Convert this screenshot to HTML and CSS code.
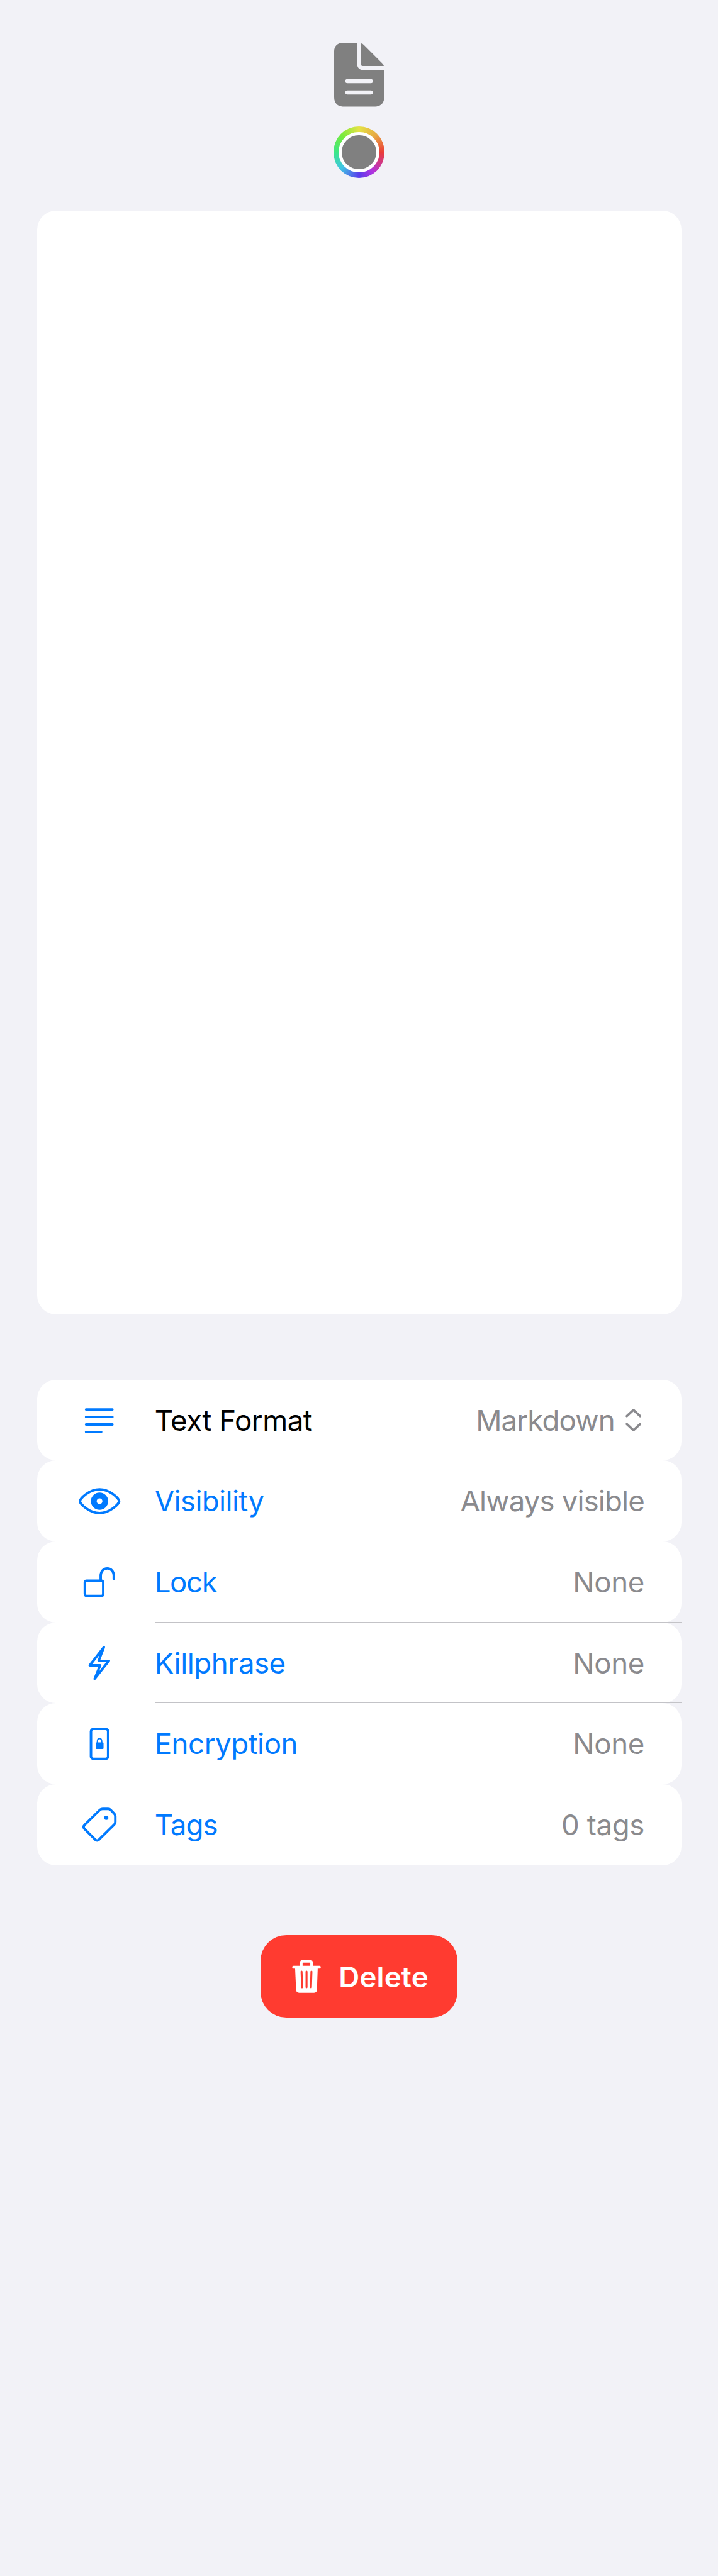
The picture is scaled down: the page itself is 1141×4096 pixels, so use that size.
FILE: index.html
```html
<!DOCTYPE html>
<html lang="en">
<head>
<meta charset="utf-8">
<meta name="viewport" content="width=device-width">
<title>Note settings</title>
<link rel="stylesheet" href="styles.css">
</head>
<body>
<main class="page">
  <header class="header">
    <svg class="doc-icon" viewBox="0 0 82 104" aria-hidden="true">
      <path fill="#808080" d="M14 0H37.300V33Q37.300 44.700 49 44.700H81.600V89C81.600 98 76 104 67 104H14C5.500 104 0 98 0 89V14C0 5.500 5.500 0 14 0Z"/>
      <path fill="#808080" d="M43.700 1Q46 1 48.500 3.500L78.500 33.500Q80.800 35.800 81 38H46.500Q43.700 38 43.700 35.200Z"/>
      <path stroke="#f2f2f7" stroke-width="6.600" stroke-linecap="round" d="M21.500 62.600H59.800M21.500 81H59.800"/>
    </svg>
    <button class="color-well" aria-label="Color"><span class="color-swatch"></span></button>
  </header>

  <section class="editor"></section>

  <section class="options">
    <div class="row row-plain">
      <svg class="icon" viewBox="0 0 110 132" aria-hidden="true"><path class="line" d="M50 48.300H93M50 60.600H93M50 72.800H93M50 85H74.700"/></svg>
      <span class="label t-format">Text Format</span>
      <span class="value v-markdown">Markdown</span>
      <svg class="chevrons" viewBox="0 0 26 38" aria-hidden="true"><path d="M2.200 12L13 2L23.800 12M2.200 25L13 35L23.800 25"/></svg>
    </div>
    <div class="row">
      <svg class="icon" viewBox="0 0 110 132" aria-hidden="true"><path class="line" d="M40 66.700C40 62.500 55 47.300 72 47.300S104 62.500 104 66.700S89 86 72 86S40 71 40 66.700Z"/><circle class="ring" cx="72" cy="66.700" r="9.400"/></svg>
      <span class="label t-visibility">Visibility</span>
      <span class="value v-visible">Always visible</span>
    </div>
    <div class="row">
      <svg class="icon" viewBox="0 0 110 132" aria-hidden="true"><rect class="line" x="48" y="64" width="30" height="25" rx="3"/><path class="line" d="M73.900 64V56C73.900 49 78 44 84.600 44S95.200 49 95.200 56V61.500"/></svg>
      <span class="label t-lock">Lock</span>
      <span class="value v-none">None</span>
    </div>
    <div class="row">
      <svg class="icon" viewBox="0 0 110 132" aria-hidden="true"><path class="line bolt" d="M79 40.200L56 69.800H73L64 91.700L87.200 62.400H70.500Z"/></svg>
      <span class="label t-killphrase">Killphrase</span>
      <span class="value v-none">None</span>
    </div>
    <div class="row">
      <svg class="icon" viewBox="0 0 110 132" aria-hidden="true"><rect class="line" x="58" y="42.200" width="28" height="48.700" rx="4"/><path class="shackle" d="M68.400 66V62.500C68.400 56.500 75.600 56.500 75.600 62.500V66"/><rect class="solid" x="65.700" y="64" width="12.800" height="11" rx="1.500"/></svg>
      <span class="label t-encryption">Encryption</span>
      <span class="value v-none">None</span>
    </div>
    <div class="row">
      <svg class="icon" viewBox="0 0 110 132" aria-hidden="true"><path class="line" d="M73 41.500Q74.500 40.200 77 40.200H86Q88.500 40.200 90 41.800L96 48Q97.700 49.800 97.700 52V61.500Q97.700 64 96 65.700L71 90.500Q68 93 65 90.500L47.500 73Q44.500 69.500 47.500 66.500Z"/><circle class="solid" cx="83" cy="54.800" r="3.400"/></svg>
      <span class="label t-tags">Tags</span>
      <span class="value v-tags">0 tags</span>
    </div>
  </section>

  <button class="delete">
    <svg class="trash" viewBox="0 0 48 54" aria-hidden="true">
      <path fill="#fff" d="M5 12H42L40.700 49Q40.500 54 36 54H11.500Q7 54 6.700 49Z"/>
      <path fill="none" stroke="#fff" stroke-width="4.600" stroke-linecap="round" d="M2.600 12.300H44.700"/>
      <path fill="none" stroke="#fff" stroke-width="4.600" d="M15 12V6Q15 2.700 18 2.700H29Q32.100 2.700 32.100 6V12"/>
      <path stroke="#ff3b30" stroke-width="3.200" stroke-linecap="round" d="M15.600 19.500L16.500 45M23.700 19.500V45M31.700 19.500L30.900 45"/>
    </svg>
    <span class="delete-label">Delete</span>
  </button>
</main>
</body>
</html>
```
FILE: styles.css
```css
html {
  font-size: 9.75px;
  background: #f2f2f7;
}

body {
  margin: 0;
  font-family: Inter, "Liberation Sans", sans-serif;
}

button {
  border: 0;
  padding: 0;
  font: inherit;
}

.page {
  box-sizing: border-box;
  height: 420rem;
  padding: 7rem 6rem 0;
  display: flex;
  flex-direction: column;
}

.header {
  display: flex;
  flex-direction: column;
  align-items: center;
  gap: 3.2rem;
  height: 27.4rem;
}

.doc-icon {
  width: 8.2rem;
  height: 10.4rem;
}

.color-well {
  box-sizing: border-box;
  width: 8.4rem;
  height: 8.4rem;
  padding: 0.9rem;
  border-radius: 50%;
  background: conic-gradient(#e5e345, #e7a843 45deg, #eb3c37 90deg, #b134df 145deg, #5a3cec 180deg, #40c6e4 228deg, #3ce787 270deg, #78eb3c 315deg, #e5e345);
}

.color-swatch {
  display: block;
  box-sizing: border-box;
  width: 6.6rem;
  height: 6.6rem;
  border: 0.6rem solid #fff;
  border-radius: 50%;
  background: #808080;
}

.editor {
  height: 180rem;
  border-radius: 3.1rem;
  background: #fff;
}

.options {
  margin-top: 10.6rem;
}

.row {
  position: relative;
  display: flex;
  align-items: center;
  height: 13.2rem;
  border-radius: 3.1rem;
  background: #fff;
  padding-right: 6rem;
  box-sizing: border-box;
  color: #007aff;
  font-size: 4.68rem;
  line-height: 5.8rem;
}

.row-plain {
  color: #000;
}

.row:not(:last-child)::after {
  content: "";
  position: absolute;
  left: 19.2rem;
  right: 0;
  bottom: 0;
  height: 1px;
  background: #c3c3c7;
}

.icon {
  flex: none;
  width: 11rem;
  height: 13.2rem;
  margin: 0 5.2rem 0 3rem;
  overflow: visible;
  fill: none;
  stroke: #007aff;
  stroke-width: 4;
  stroke-linecap: round;
  stroke-linejoin: round;
}

.icon .ring {
  stroke-width: 9.4;
}

.icon .shackle {
  stroke-width: 2;
}

.icon .solid {
  fill: #007aff;
  stroke: none;
}

.label,
.value {
  padding-top: 0.15rem;
  white-space: nowrap;
}

.label {
  flex: 1;
}

.value {
  color: #8a8a8e;
}

.t-format,
.t-killphrase,
.t-encryption {
  letter-spacing: -0.05rem;
}

.t-visibility {
  letter-spacing: -0.065rem;
}

.t-lock {
  letter-spacing: -0.14rem;
}

.t-tags {
  letter-spacing: -0.1rem;
}

.v-markdown,
.v-visible {
  letter-spacing: -0.09rem;
}

.v-none,
.v-tags {
  letter-spacing: -0.04rem;
}

.chevrons {
  width: 2.6rem;
  height: 3.8rem;
  margin: 0 0.45rem 0 1.8rem;
  fill: none;
  stroke: #8a8a8e;
  stroke-width: 3.8;
  stroke-linecap: round;
  stroke-linejoin: round;
}

.delete {
  align-self: center;
  display: flex;
  align-items: center;
  box-sizing: border-box;
  width: 32.2rem;
  height: 13.4rem;
  margin-top: 11.4rem;
  padding-left: 5.2rem;
  border-radius: 4.2rem;
  background: #ff3b30;
  color: #fff;
}

.trash {
  width: 4.8rem;
  height: 5.4rem;
  margin-right: 2.8rem;
}

.delete-label {
  padding-top: 0.4rem;
  font-size: 4.68rem;
  line-height: 5.8rem;
  font-weight: 600;
  letter-spacing: 0.017rem;
}
```
